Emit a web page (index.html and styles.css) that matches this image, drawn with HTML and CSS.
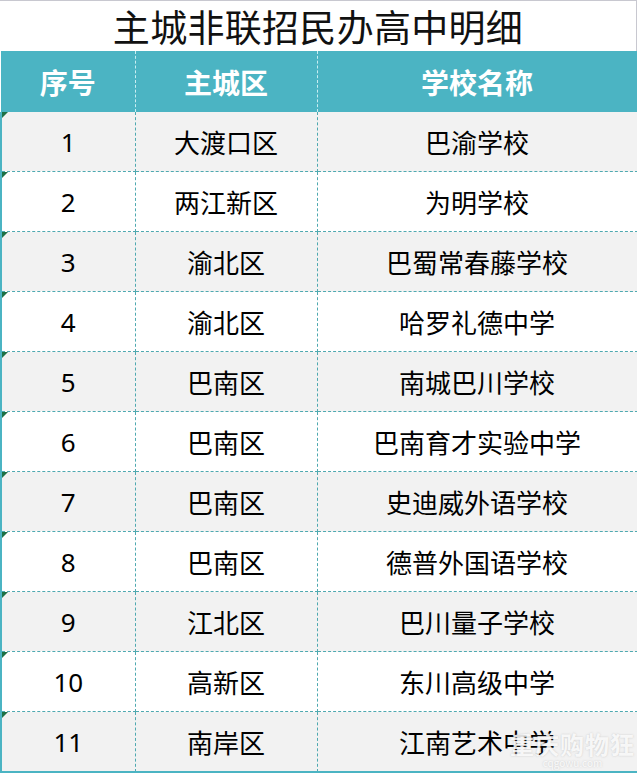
FILE: index.html
```html
<!DOCTYPE html>
<html lang="zh">
<head>
<meta charset="utf-8">
<link rel="stylesheet" href="styles.css">
</head>
<body>
<div class="sheet">
  <div class="title">主城非联招民办高中明细</div>
  <table class="grid">
    <colgroup><col class="c1"><col class="c2"><col class="c3"></colgroup>
    <thead>
      <tr><th>序号</th><th>主城区</th><th>学校名称</th></tr>
    </thead>
    <tbody>
      <tr class="odd"><td class="num">1</td><td>大渡口区</td><td>巴渝学校</td></tr>
      <tr><td class="num">2</td><td>两江新区</td><td>为明学校</td></tr>
      <tr class="odd"><td class="num">3</td><td>渝北区</td><td>巴蜀常春藤学校</td></tr>
      <tr><td class="num">4</td><td>渝北区</td><td>哈罗礼德中学</td></tr>
      <tr class="odd"><td class="num">5</td><td>巴南区</td><td>南城巴川学校</td></tr>
      <tr><td class="num">6</td><td>巴南区</td><td>巴南育才实验中学</td></tr>
      <tr class="odd"><td class="num">7</td><td>巴南区</td><td>史迪威外语学校</td></tr>
      <tr><td class="num">8</td><td>巴南区</td><td>德普外国语学校</td></tr>
      <tr class="odd"><td class="num">9</td><td>江北区</td><td>巴川量子学校</td></tr>
      <tr><td class="num">10</td><td>高新区</td><td>东川高级中学</td></tr>
      <tr class="odd"><td class="num">11</td><td>南岸区</td><td>江南艺术中学</td></tr>
    </tbody>
  </table>
  <div class="watermark"><span class="wm-main">重庆购物狂</span><span class="wm-sub">cqgowu.com</span></div>
</div>
</body>
</html>
```

FILE: styles.css
```css
html, body {
  margin: 0;
  padding: 0;
  background: #ffffff;
}
body {
  font-family: "Noto Sans CJK SC", "Noto Sans", sans-serif;
  color: #000;
}
.sheet {
  position: relative;
  width: 637px;
  height: 773px;
  overflow: hidden;
  box-sizing: border-box;
  border-bottom: 2px solid #4bb4c3;
}
.title {
  height: 51px;
  box-sizing: border-box;
  border-top: 1px solid #c8c8d0;
  border-right: 1px solid #c8c8d0;
  text-align: center;
  font-size: 37px;
  line-height: 50px;
  letter-spacing: 0.3px;
  color: #111;
}
.grid {
  border-collapse: collapse;
  table-layout: fixed;
  width: 636px;
}
.c1 { width: 134px; }
.c2 { width: 182px; }
.c3 { width: 320px; }
.grid th {
  height: 61px;
  padding: 0;
  background: #4bb4c3;
  color: #ffffff;
  font-weight: 700;
  font-size: 28px;
  text-align: center;
  border-left: 1px dashed #c9eef2;
  border-right: 1px dashed #c9eef2;
}
.grid th:first-child { border-left: none; }
.grid td {
  height: 59px;
  padding: 0;
  text-align: center;
  font-size: 26px;
  border: 1px dashed #4fa9b0;
  background: #ffffff;
}
.grid tr.odd td { background: #f2f2f2; }
.grid td:first-child {
  border-left: 2px solid #4bb4c3;
}
.grid td.num {
  position: relative;
  font-family: "Noto Sans", "Noto Sans CJK SC", sans-serif;
}
.grid td.num::before {
  content: "";
  position: absolute;
  left: 0;
  top: 0;
  border-top: 6px solid #1e7145;
  border-right: 6px solid transparent;
}
.grid tbody tr:first-child td { border-top: none; }
.watermark {
  position: absolute;
  right: 2px;
  bottom: 3px;
  display: flex;
  flex-direction: column;
  align-items: center;
  color: rgba(255, 255, 255, 0.85);
  text-shadow: 0 0 2px rgba(120, 120, 120, 0.35);
  line-height: 1;
}
.wm-main {
  font-size: 24px;
  font-weight: 700;
  letter-spacing: 1px;
}
.wm-sub {
  font-size: 10px;
  margin-top: 2px;
}
```
